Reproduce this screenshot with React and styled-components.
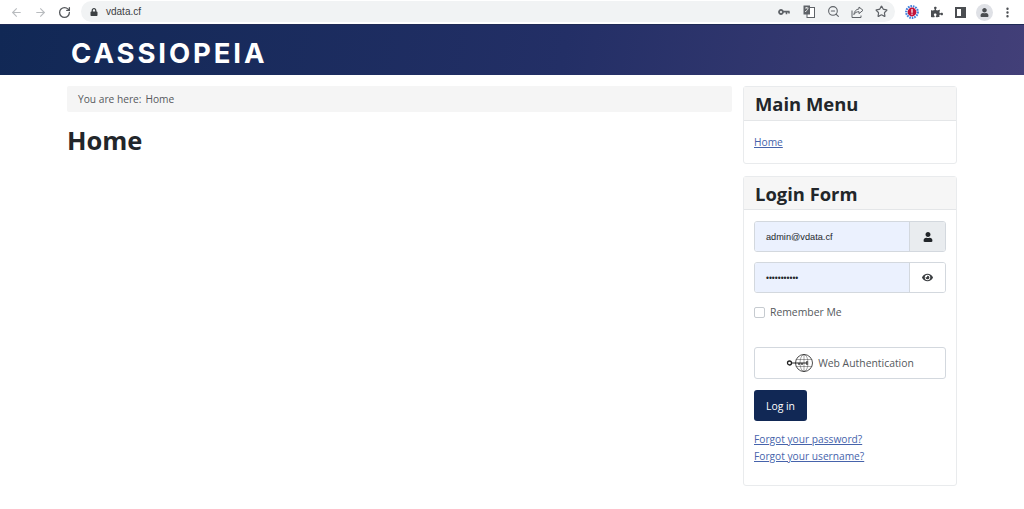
import React from "react";
import styled, { createGlobalStyle } from "styled-components";
import { ArrowLeft, ArrowRight, RotateCw, ZoomOut, Star, EllipsisVertical } from "lucide-react";
import { FaUser, FaEye, FaLock, FaPuzzlePiece } from "react-icons/fa";

const GlobalStyle = createGlobalStyle`
  html, body { margin: 0; padding: 0; background: #fff; }
  body { font-family: "Open Sans", "Liberation Sans", sans-serif; color: #22262a; overflow: hidden; }
  * { box-sizing: border-box; }
`;

const Page = styled.div`
  width: 1024px;
  height: 509px;
  overflow: hidden;
  background: #fff;
`;

const Toolbar = styled.div`
  height: 24px;
  display: flex;
  align-items: center;
  padding-left: 10px;
  background: #fff;
`;

const NavButton = styled.span`
  display: flex;
  width: 13px;
  margin-right: ${p => p.$gap}px;
  color: ${p => p.$off ? "#b9bcbf" : "#55585c"};
`;

const Omnibox = styled.div`
  width: 814px;
  height: 21px;
  margin-left: -1px;
  margin-top: -1px;
  display: flex;
  align-items: center;
  padding: 0 7px 0 9px;
  border-radius: 11px;
  background: #f1f3f4;
  color: #3c4043;
  font-family: "Liberation Sans", sans-serif;
  font-size: 10px;
`;

const Url = styled.span`
  margin-left: 8px;
  flex: 1;
`;

const BoxIcon = styled.span`
  display: flex;
  margin-left: ${p => p.$gap}px;
  color: #5f6368;
`;

const ExtIcon = styled.span`
  display: flex;
  margin-left: ${p => p.$gap}px;
  color: #4a4d51;
`;

const SidePanelIcon = styled.span`
  display: block;
  width: 11px;
  height: 11px;
  margin-left: 12px;
  border: 2px solid #4a4d51;
  border-right-width: 5px;
`;

const Avatar = styled.span`
  width: 17px;
  height: 17px;
  margin-left: 10px;
  display: flex;
  align-items: center;
  justify-content: center;
  border-radius: 50%;
  background: #dfe1e6;
  color: #4a4d51;
`;

const Banner = styled.header`
  height: 51px;
  padding-left: 71px;
  display: flex;
  align-items: center;
  background: linear-gradient(100deg, #112855 0%, #232f66 55%, #423f78 100%);
  border-top: 1px solid #1f2a55;
`;

const Logo = styled.div`
  font-family: "Inter", sans-serif;
  font-weight: 700;
  font-size: 27.5px;
  letter-spacing: 2.9px;
  color: #fff;
  line-height: 1;
  margin-top: 7px;
`;

const Body = styled.div`
  display: grid;
  grid-template-columns: 665px 214px;
  column-gap: 11px;
  padding: 11px 0 0 67px;
`;

const Breadcrumb = styled.div`
  height: 26px;
  padding-left: 11px;
  display: flex;
  align-items: center;
  gap: 4px;
  background: #f5f5f5;
  border-radius: 2px;
  font-size: 10.2px;
  color: #55595d;
`;

const Heading = styled.h1`
  margin: 12px 0 0;
  font-size: 25.5px;
  line-height: 32px;
  font-weight: 700;
  color: #22262a;
`;

const Side = styled.aside`
  display: flex;
  flex-direction: column;
  gap: 12px;
`;

const Card = styled.section`
  border: 1px solid #e9ebed;
  border-radius: 3px;
  background: #fff;
  height: ${p => p.$height}px;
`;

const CardHead = styled.h3`
  margin: 0;
  height: ${p => p.$height}px;
  padding-left: 11px;
  display: flex;
  align-items: center;
  background: #f6f6f6;
  border-bottom: 1px solid #e4e6e8;
  font-size: 18.4px;
  font-weight: 700;
  color: #22262a;
`;

const CardBody = styled.div`
  padding: ${p => p.$top}px 10px 0 10px;
`;

const Link = styled.a`
  display: block;
  font-size: 10.2px;
  line-height: 17px;
  color: #4663ab;
  text-decoration: underline;
`;

const InputGroup = styled.div`
  display: flex;
  height: 31px;
  margin-bottom: 10px;
  border: 1px solid #d3d8de;
  border-radius: 3px;
  overflow: hidden;
`;

const Field = styled.div`
  flex: 1;
  padding-left: 11px;
  display: flex;
  align-items: center;
  background: #ebf1fe;
  font-family: "Liberation Sans", sans-serif;
  font-size: ${p => p.$size}px;
  color: #22262a;
`;

const Addon = styled.div`
  width: 36px;
  display: flex;
  align-items: center;
  justify-content: center;
  border-left: 1px solid #d3d8de;
  background: ${p => p.$shaded ? "#e9ecef" : "#fff"};
  color: ${p => p.$shaded ? "#22262a" : "#3a3d40"};
`;

const CheckRow = styled.label`
  display: flex;
  align-items: center;
  gap: 5px;
  margin-top: 12px;
  font-size: 10.4px;
  color: #55595d;
`;

const Check = styled.span`
  width: 11px;
  height: 11px;
  border: 1px solid #c6cbd0;
  border-radius: 2px;
  background: #fff;
`;

const WebAuthButton = styled.div`
  height: 32px;
  margin-top: 28px;
  display: flex;
  align-items: center;
  justify-content: center;
  gap: 4px;
  border: 1px solid #d3d8de;
  border-radius: 3px;
  font-size: 10.4px;
  color: #55595d;
`;

const LoginButton = styled.button`
  display: block;
  width: 53px;
  height: 31px;
  margin: 11px 0 10px;
  padding: 0;
  border: 0;
  border-radius: 3px;
  background: #112855;
  color: #fff;
  font-family: inherit;
  font-size: 10.4px;
`;

const KeyIcon = () => (
  <svg width="12" height="8" viewBox="0 0 12 8" fill="none" stroke="#5f6368">
    <circle cx="3" cy="4" r="2" strokeWidth="1.8" />
    <path d="M5 3.6h6.5M8.5 3.6v2.6M11 3.6v2" strokeWidth="1.6" />
  </svg>
);

const TranslateIcon = () => (
  <svg width="12" height="13" viewBox="0 0 12 13" fill="none">
    <rect x="4" y="2.5" width="7.5" height="10" fill="#fff" stroke="#5f6368" />
    <rect x="0.5" y="0.5" width="6.5" height="9" fill="#5f6368" />
    <path d="M2 3h3.4M3.7 2v1M5 3.4C4.6 5 3.4 6.2 2 6.8" stroke="#fff" strokeWidth="0.8" />
  </svg>
);

const ShareIcon = () => (
  <svg width="13" height="12" viewBox="0 0 13 12" fill="none" stroke="#5f6368" strokeWidth="1">
    <path d="M8 1l4 3.3-4 3.3V5.7C5.6 5.7 4 6.6 2.9 8.6 3.1 5.7 5 3.2 8 2.9z" />
    <path d="M1 4.5v7h9V9.5" />
  </svg>
);

const ExtensionBadge = () => (
  <svg width="14" height="14" viewBox="0 0 14 14" fill="none">
    <circle cx="7" cy="7" r="5.8" stroke="#3f7fdc" strokeWidth="2.2" strokeDasharray="1.6 0.9" />
    <circle cx="7" cy="7" r="4.4" fill="#c4143a" />
    <rect x="6.4" y="4" width="1.2" height="3.8" fill="#fff" />
    <rect x="6.4" y="8.6" width="1.2" height="1.2" fill="#fff" />
  </svg>
);

const WebAuthIcon = () => (
  <svg width="28" height="20" viewBox="0 0 28 20" fill="none" stroke="#222">
    <circle cx="18" cy="10" r="8.5" strokeWidth="0.8" />
    <ellipse cx="18" cy="10" rx="4" ry="8.5" strokeWidth="0.4" />
    <path d="M10 6.5h16M10 13.5h16M18 1.5v17" strokeWidth="0.4" />
    <circle cx="3.5" cy="10" r="2" strokeWidth="1.3" />
    <path d="M5.5 10H21M13 10v2M16 10v2M21 8v4" strokeWidth="1.2" />
  </svg>
);

export default function App() {
  return (
    <Page>
      <GlobalStyle />
      <Toolbar>
        <NavButton $off $gap={11}><ArrowLeft size={13} /></NavButton>
        <NavButton $off $gap={11}><ArrowRight size={13} /></NavButton>
        <NavButton $gap={11}><RotateCw size={13} strokeWidth={2.4} /></NavButton>
        <Omnibox>
          <FaLock size={8} />
          <Url>vdata.cf</Url>
          <BoxIcon><KeyIcon /></BoxIcon>
          <BoxIcon $gap={13}><TranslateIcon /></BoxIcon>
          <BoxIcon $gap={12}><ZoomOut size={13} /></BoxIcon>
          <BoxIcon $gap={11}><ShareIcon /></BoxIcon>
          <BoxIcon $gap={11}><Star size={13} strokeWidth={2.2} /></BoxIcon>
        </Omnibox>
        <ExtIcon $gap={10}><ExtensionBadge /></ExtIcon>
        <ExtIcon $gap={12}><FaPuzzlePiece size={12} /></ExtIcon>
        <SidePanelIcon />
        <Avatar><FaUser size={9} /></Avatar>
        <ExtIcon $gap={8}><EllipsisVertical size={13} strokeWidth={2.4} /></ExtIcon>
      </Toolbar>
      <Banner>
        <Logo>CASSIOPEIA</Logo>
      </Banner>
      <Body>
        <main>
          <Breadcrumb>
            <span>You are here:</span>
            <span>Home</span>
          </Breadcrumb>
          <Heading>Home</Heading>
        </main>
        <Side>
          <Card $height={78}>
            <CardHead $height={34}>Main Menu</CardHead>
            <CardBody $top={13}>
              <Link>Home</Link>
            </CardBody>
          </Card>
          <Card $height={310}>
            <CardHead $height={33}>Login Form</CardHead>
            <CardBody $top={11}>
              <InputGroup>
                <Field $size={9.2}>admin@vdata.cf</Field>
                <Addon $shaded><FaUser size={10} /></Addon>
              </InputGroup>
              <InputGroup>
                <Field $size={8.4}>•••••••••••</Field>
                <Addon><FaEye size={11} /></Addon>
              </InputGroup>
              <CheckRow>
                <Check />
                Remember Me
              </CheckRow>
              <WebAuthButton>
                <WebAuthIcon />
                Web Authentication
              </WebAuthButton>
              <LoginButton>Log in</LoginButton>
              <Link>Forgot your password?</Link>
              <Link>Forgot your username?</Link>
            </CardBody>
          </Card>
        </Side>
      </Body>
    </Page>
  );
}
